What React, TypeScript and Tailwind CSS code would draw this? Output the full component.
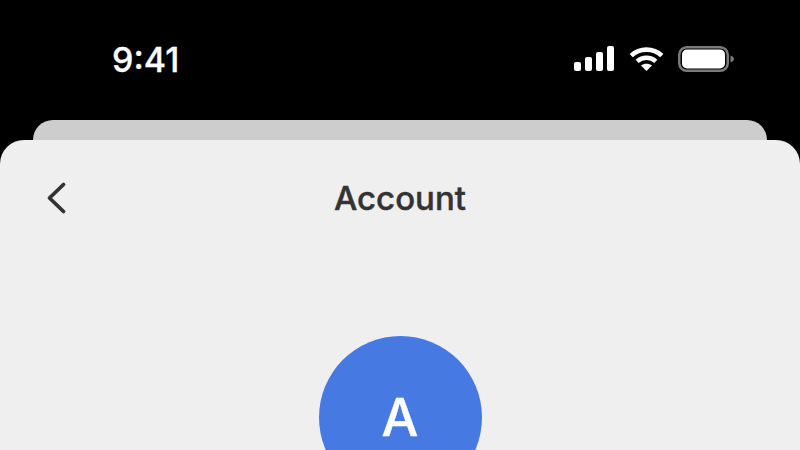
function StatusIcons() {
  return (
    <div className="flex items-center">
      <svg width="41" height="26" viewBox="0 0 41 26" fill="white" aria-hidden="true">
        <rect x="0" y="16" width="7" height="9" rx="2" />
        <rect x="11" y="11" width="7" height="14" rx="2" />
        <rect x="22" y="6" width="7" height="19" rx="2" />
        <rect x="33" y="0" width="7" height="25" rx="2" />
      </svg>
      <svg className="ml-[14px]" width="36" height="26" viewBox="0 0 36 26" fill="none" stroke="white" strokeWidth="4.6" aria-hidden="true">
        <path d="M2.2 9.6C10.8 1.6 24.2 1.6 32.8 9.6" />
        <path d="M8.2 15.4C13.6 10.6 21.4 10.6 26.8 15.4" />
        <path d="M17.5 25 L12 19.6C15.2 17 19.8 17 23 19.6Z" fill="white" stroke="none" />
      </svg>
      <svg className="ml-[13px]" width="57" height="26" viewBox="0 0 57 26" fill="none" aria-hidden="true">
        <rect x="1.25" y="1.25" width="48.5" height="23.5" rx="7.5" stroke="#7a7a7a" strokeWidth="2.5" />
        <rect x="4" y="3.5" width="43" height="19" rx="5" fill="white" />
        <path d="M52.5 9.5C54.8 10.2 56 11.5 56 13C56 14.5 54.8 15.8 52.5 16.5Z" fill="#7a7a7a" />
      </svg>
    </div>
  );
}

export default function App() {
  return (
    <div className="flex h-[450px] w-[800px] flex-col overflow-hidden bg-black font-['Inter',sans-serif]">
      <div className="flex h-[120px] shrink-0 items-start justify-between pl-[112px] pr-[65px] pt-[38px]">
        <span className="text-[34px] font-medium leading-[44px] text-white [-webkit-text-stroke:0.3px_white]">9:41</span>
        <div className="pt-[8px]">
          <StatusIcons />
        </div>
      </div>

      <div className="mx-[33px] h-5 shrink-0 rounded-t-[20px] bg-[#cdcdcd]" />

      <div className="flex flex-1 flex-col items-center rounded-t-[24px] bg-[#efefef]">
        <div className="relative flex h-[118px] w-full shrink-0 items-center justify-center">
          <svg
            className="absolute left-[45px] top-[40px]"
            width="24"
            height="36"
            viewBox="0 0 24 36"
            fill="none"
            stroke="#333333"
            strokeWidth="3.8"
            strokeLinecap="round"
            strokeLinejoin="round"
            aria-hidden="true"
          >
            <path d="M18.5 4.5 L4.5 18 L18.5 31.5" />
          </svg>
          <h1 className="text-[33px] font-medium text-[#333333] [-webkit-text-stroke:0.4px_#333333]">Account</h1>
        </div>
        <div className="mt-[78px] flex h-[163px] w-[163px] shrink-0 items-center justify-center rounded-full bg-[#4679e2] text-[52px] font-medium text-white [-webkit-text-stroke:0.4px_white]">
          A
        </div>
      </div>
    </div>
  );
}
